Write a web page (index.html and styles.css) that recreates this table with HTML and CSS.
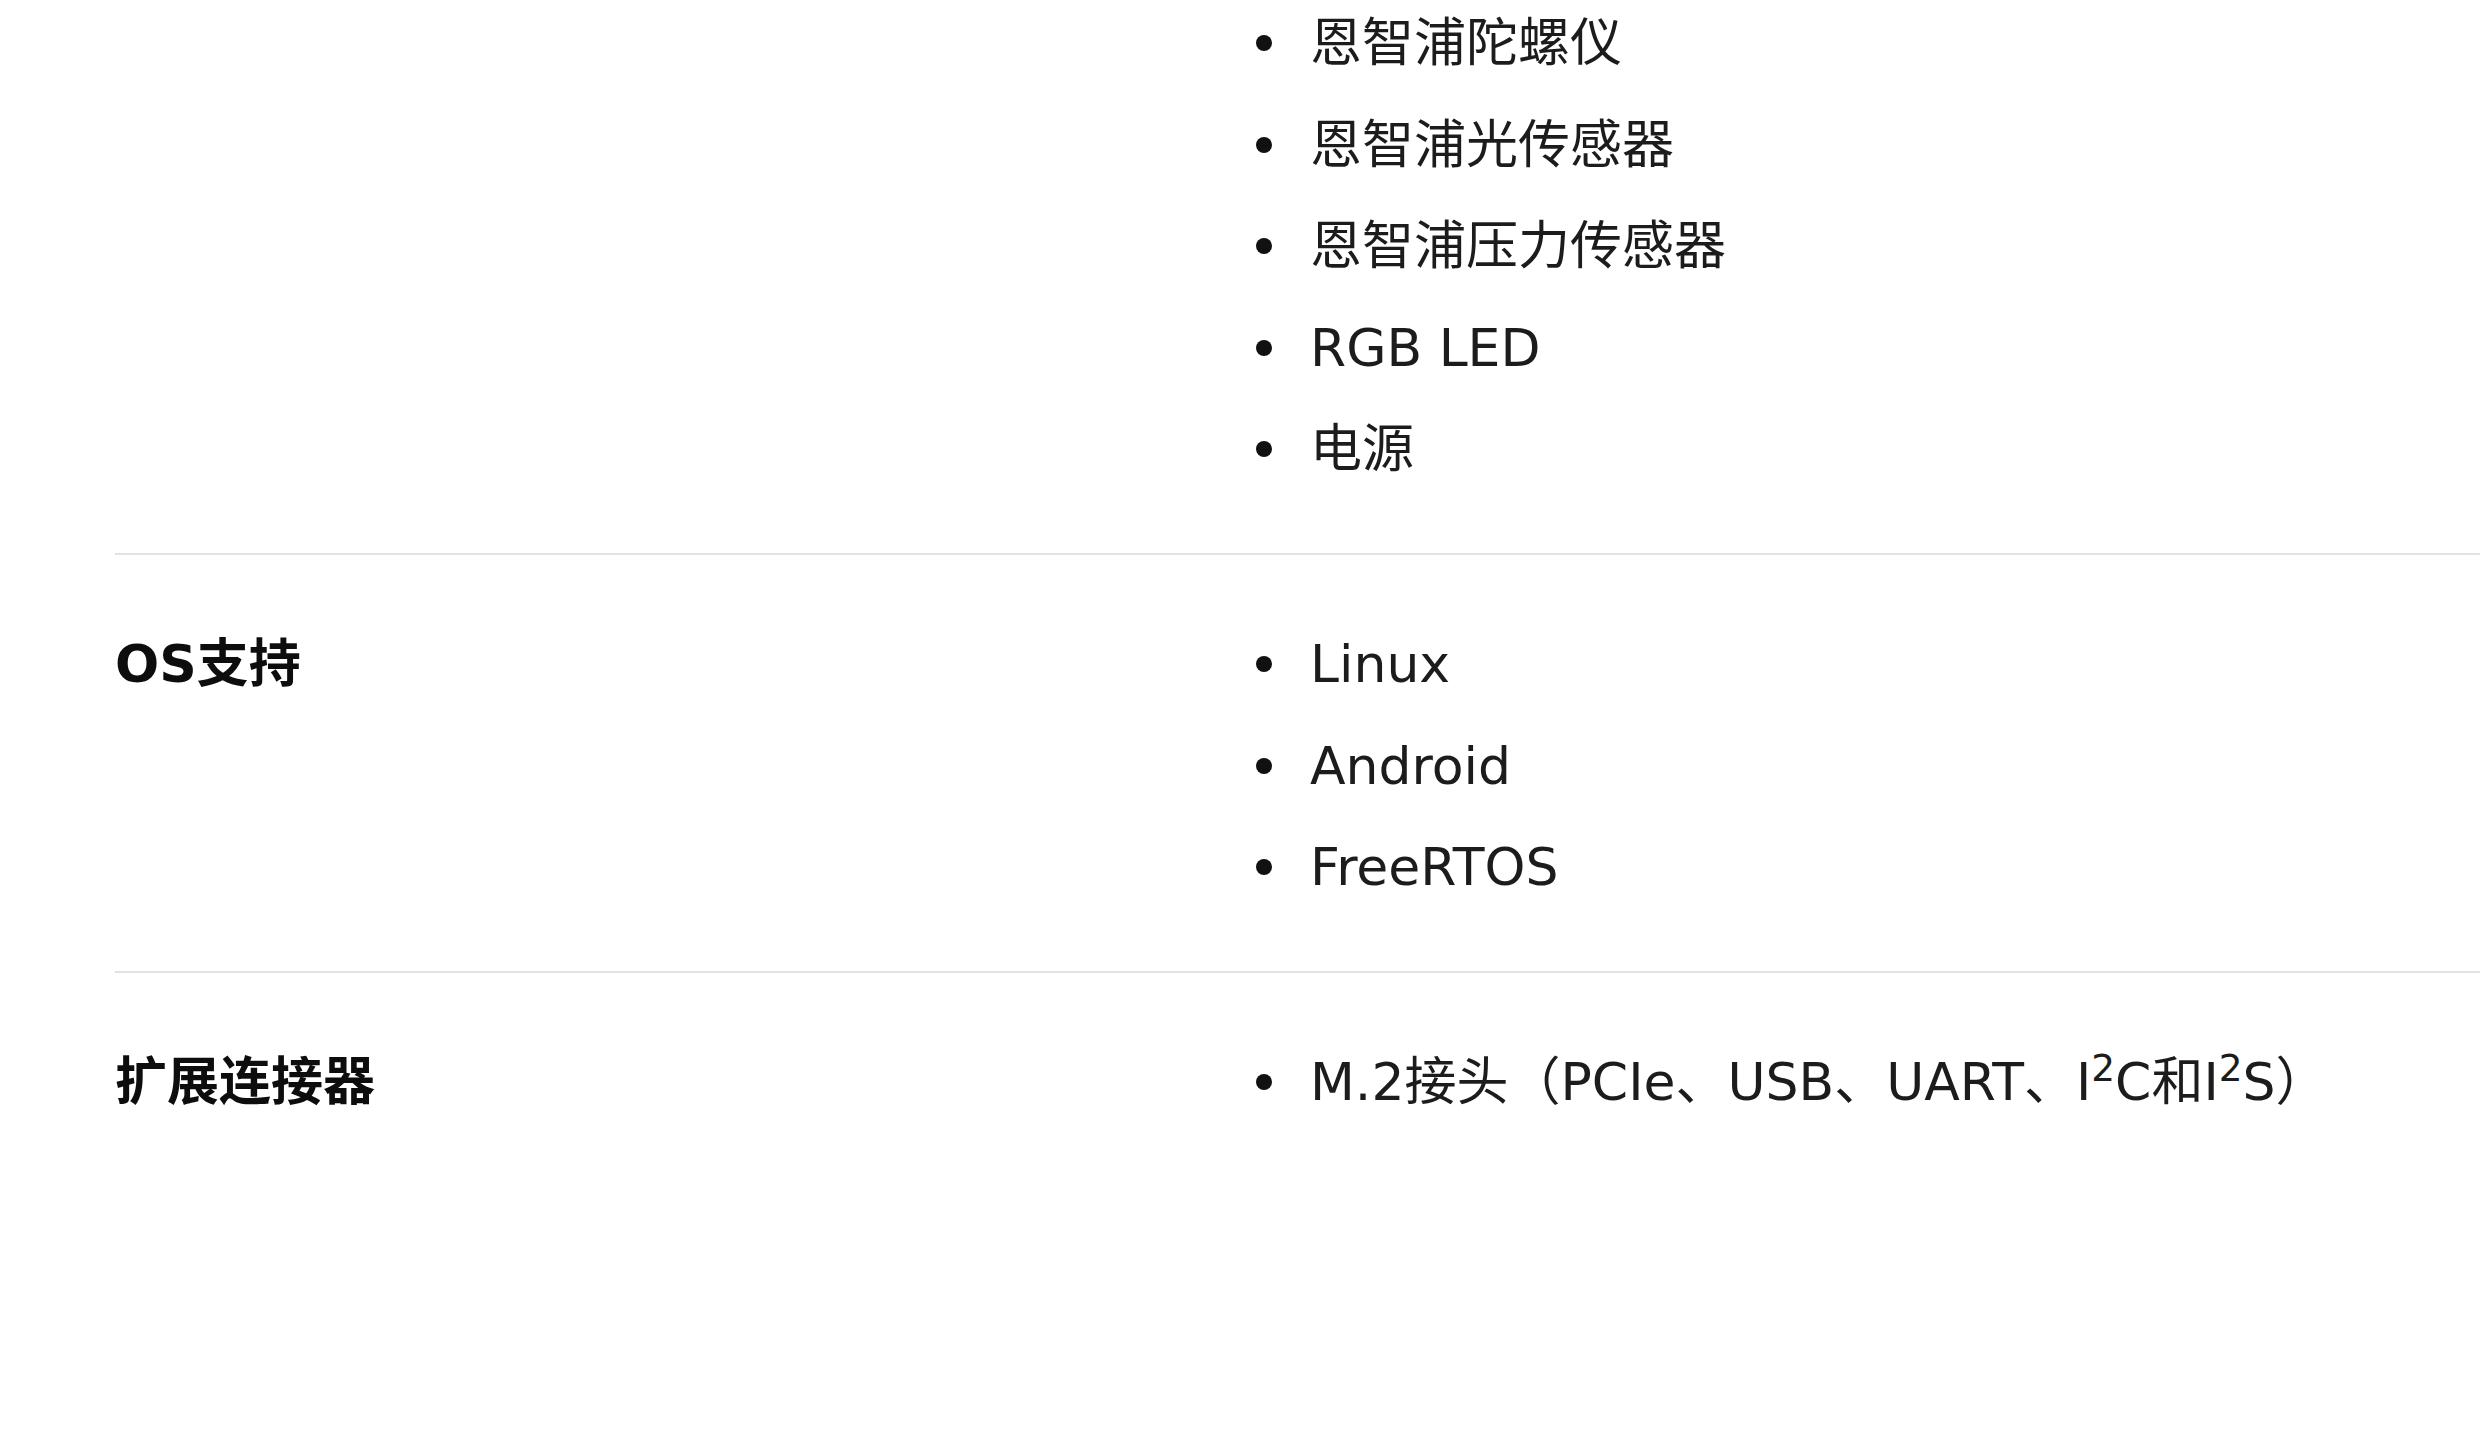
FILE: index.html
```html
<!DOCTYPE html>
<html lang="zh-CN">
<head>
<meta charset="utf-8">
<title>规格</title>
<link rel="stylesheet" href="styles.css">
</head>
<body>
<main class="specs">
  <section class="row">
    <div class="label"></div>
    <ul class="items">
      <li><span>恩智浦陀螺仪</span></li>
      <li><span>恩智浦光传感器</span></li>
      <li><span>恩智浦压力传感器</span></li>
      <li><span>RGB LED</span></li>
      <li><span>电源</span></li>
    </ul>
  </section>
  <section class="row">
    <div class="label">OS支持</div>
    <ul class="items">
      <li><span>Linux</span></li>
      <li><span>Android</span></li>
      <li><span>FreeRTOS</span></li>
    </ul>
  </section>
  <section class="row last">
    <div class="label">扩展连接器</div>
    <ul class="items">
      <li><span>M.2接头（PCIe、USB、UART、I<sup>2</sup>C和I<sup>2</sup>S）</span></li>
    </ul>
  </section>
</main>
</body>
</html>
```
FILE: styles.css
```css
html, body {
  margin: 0;
  padding: 0;
  background: #ffffff;
}
body {
  font-family: "DejaVu Sans", "Noto Sans CJK SC", sans-serif;
  font-size: 52px;
  line-height: 78px;
  color: #1c1c1c;
}
.specs {
  padding: 4px 0 0 115px;
}
.row {
  display: grid;
  grid-template-columns: 1141px 1fr;
  padding: 70px 0 65px;
  border-bottom: 2px solid #e2e2df;
}
.row:first-child {
  padding-top: 0;
}
.row.last {
  border-bottom: none;
}
.label {
  font-weight: 700;
  color: #0d0d0d;
}
.items {
  list-style: none;
  margin: 0;
  padding: 0;
  display: flex;
  flex-direction: column;
  gap: 23.5px;
}
.items li {
  display: flex;
  align-items: center;
  gap: 38px;
}
.items li::before {
  content: "";
  width: 16px;
  height: 16px;
  border-radius: 50%;
  background: #111;
  flex: none;
}
sup {
  font-size: 0.72em;
  line-height: 0;
  vertical-align: 0.52em;
}
```
